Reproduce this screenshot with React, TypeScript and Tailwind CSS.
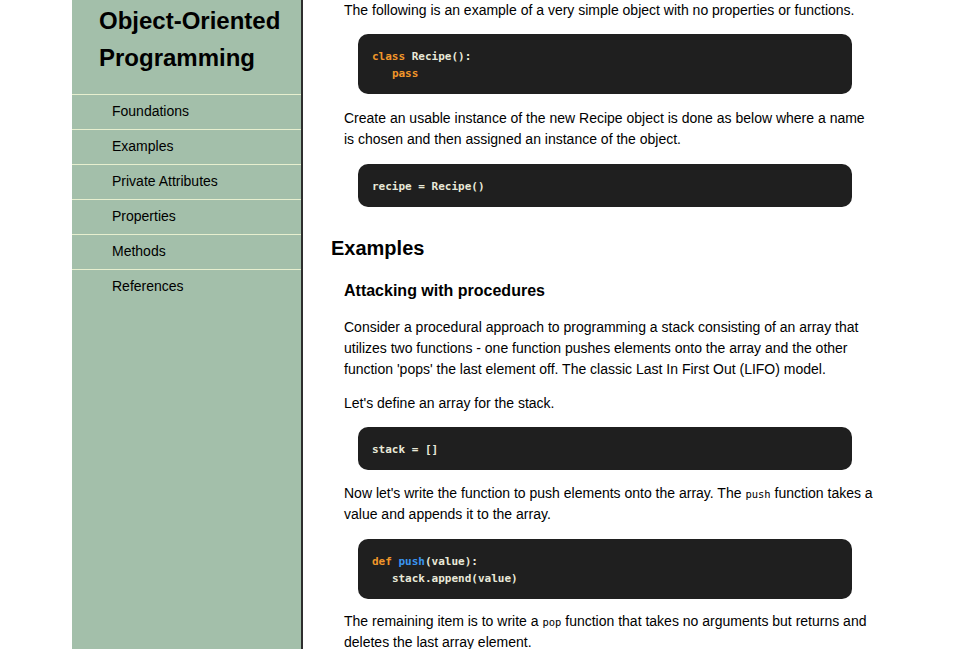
import React from "react";

const sans = { fontFamily: '"Liberation Sans", Arial, Helvetica, sans-serif' };

function Code({ children, className = "" }: { children: React.ReactNode; className?: string }) {
  return (
    <pre
      className={`w-[494px] ml-[14px] rounded-[10px] bg-[#1f1f1f] px-[14px] pt-[14px] pb-[12px] text-[11px] leading-[17px] text-[#e9e9d9] whitespace-pre font-bold ${className}`}
      style={{ fontFamily: '"DejaVu Sans Mono", "Liberation Mono", monospace' }}
    >
      {children}
    </pre>
  );
}

function InlineCode({ children }: { children: React.ReactNode }) {
  return (
    <code
      className="text-[10.5px] leading-[0]"
      style={{ fontFamily: '"DejaVu Sans Mono", "Liberation Mono", monospace' }}
    >
      {children}
    </code>
  );
}

const nav = ["Foundations", "Examples", "Private Attributes", "Properties", "Methods", "References"];

export default function App() {
  return (
    <div className="w-[978px] h-[649px] overflow-hidden bg-white text-black" style={sans}>
      <div className="flex h-full ml-[72px]">
        <aside className="w-[231px] shrink-0 h-full bg-[#a3bfaa] border-r-2 border-[#2e2e2e]">
          <h1 className="pl-[27px] pt-[1.5px] text-[24px] leading-[37px] font-bold">
            Object-Oriented
            <br />
            Programming
          </h1>
          <ul className="mt-[18px]">
            {nav.map((n) => (
              <li key={n} className="h-[35px] flex items-center pl-[40px] border-t border-[#e7efcf] text-[14px]">
                {n}
              </li>
            ))}
          </ul>
        </aside>
        <main className="pl-[28px] flex flex-col">
          <div className="pl-[13px] flex flex-col">
            <p className="w-[530px] text-[14px] leading-[21px]">
              The following is an example of a very simple object with no properties or functions.
            </p>
            <Code className="mt-[13px]">
              <span className="text-[#f0962a]">class</span> Recipe():{"\n"}
              {"   "}
              <span className="text-[#f0962a]">pass</span>
            </Code>
            <p className="mt-[14px] w-[530px] text-[14px] leading-[21px]">
              Create an usable instance of the new Recipe object is done as below where a name is chosen and then
              assigned an instance of the object.
            </p>
            <Code className="mt-[14px]">recipe = Recipe()</Code>
          </div>
          <h2 className="mt-[26px] text-[20px] leading-[30px] font-bold">Examples</h2>
          <div className="pl-[13px] flex flex-col">
            <h3 className="mt-[16px] text-[16px] leading-[24px] font-bold">Attacking with procedures</h3>
            <p className="mt-[14px] w-[530px] text-[14px] leading-[21px]">
              Consider a procedural approach to programming a stack consisting of an array that utilizes two
              functions - one function pushes elements onto the array and the other function 'pops' the last element
              off. The classic Last In First Out (LIFO) model.
            </p>
            <p className="mt-[13px] w-[530px] text-[14px] leading-[21px]">Let's define an array for the stack.</p>
            <Code className="mt-[13px]">stack = []</Code>
            <p className="mt-[13px] w-[530px] text-[14px] leading-[21px]">
              Now let's write the function to push elements onto the array. The <InlineCode>push</InlineCode> function
              takes a value and appends it to the array.
            </p>
            <Code className="mt-[14px]">
              <span className="text-[#f0962a]">def</span> <span className="text-[#3a95f0]">push</span>(value):{"\n"}
              {"   "}stack.append(value)
            </Code>
            <p className="mt-[12px] w-[530px] text-[14px] leading-[21px]">
              The remaining item is to write a <InlineCode>pop</InlineCode> function that takes no arguments but
              returns and deletes the last array element.
            </p>
          </div>
        </main>
      </div>
    </div>
  );
}
